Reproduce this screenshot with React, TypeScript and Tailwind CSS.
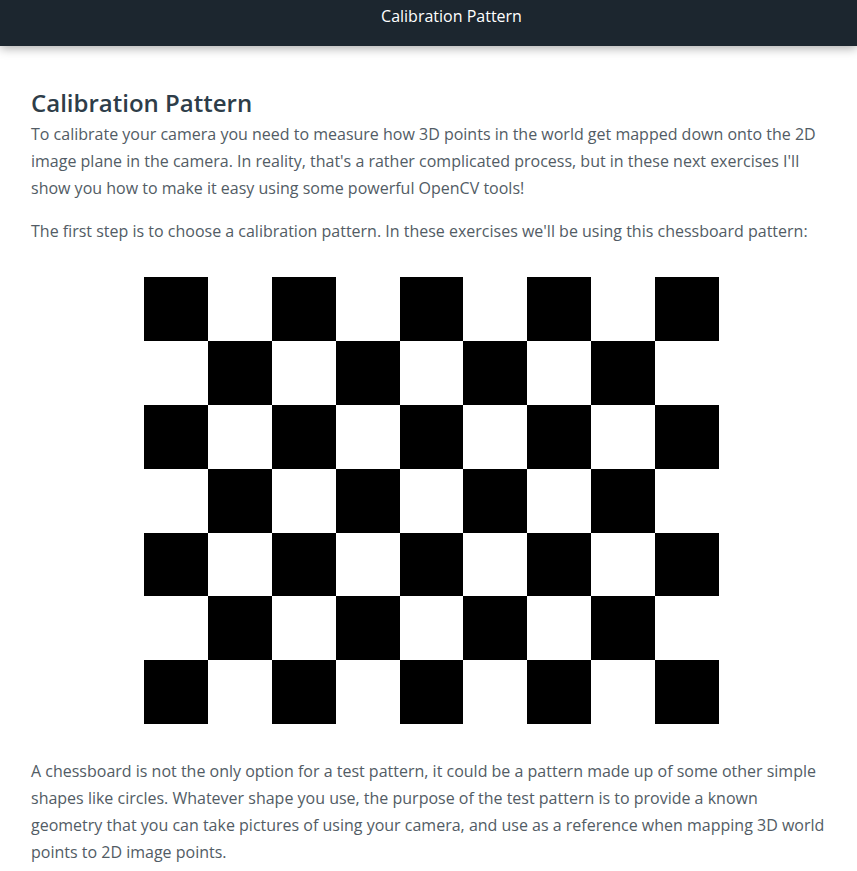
export default function App() {
  const rows = 7;
  const cols = 9;

  return (
    <div className="min-h-screen bg-white font-['Open_Sans',sans-serif]">
      {/* Top bar */}
      <div className="h-[46px] bg-[#1c262f] shadow-[0_2px_10px_rgba(0,0,0,0.35)] flex items-start justify-center pt-[4px] pl-[46px]">
        <span className="text-white text-[16px] leading-[24px]">Calibration Pattern</span>
      </div>

      <div className="px-[31px] pt-[41px] pb-10">
        <h1 className="mb-[2px] text-[24px] leading-[32px] font-semibold text-[#2e3d49]">Calibration Pattern</h1>
        <p className="text-[16px] leading-[27px] text-[#525c65]">
          To calibrate your camera you need to measure how 3D points in the world get mapped down onto the 2D
          image plane in the camera. In reality, that's a rather complicated process, but in these next exercises I'll
          show you how to make it easy using some powerful OpenCV tools!
        </p>
        <p className="mt-[16px] text-[16px] leading-[27px] text-[#525c65]">
          The first step is to choose a calibration pattern. In these exercises we'll be using this chessboard pattern:
        </p>

        {/* Chessboard */}
        <div className="mt-[32px] ml-[113px] grid grid-cols-[repeat(9,63.9px)] grid-rows-[repeat(7,63.9px)] w-fit">
          {Array.from({ length: rows * cols }).map((_, i) => {
            const r = Math.floor(i / cols);
            const c = i % cols;
            const black = (r + c) % 2 === 0;
            return <div key={i} className={black ? 'bg-black' : 'bg-white'} />;
          })}
        </div>

        <p className="mt-[34px] text-[16px] leading-[27px] text-[#525c65]">
          A chessboard is not the only option for a test pattern, it could be a pattern made up of some other simple
          shapes like circles. Whatever shape you use, the purpose of the test pattern is to provide a known
          geometry that you can take pictures of using your camera, and use as a reference when mapping 3D world
          points to 2D image points.
        </p>
      </div>
    </div>
  );
}
